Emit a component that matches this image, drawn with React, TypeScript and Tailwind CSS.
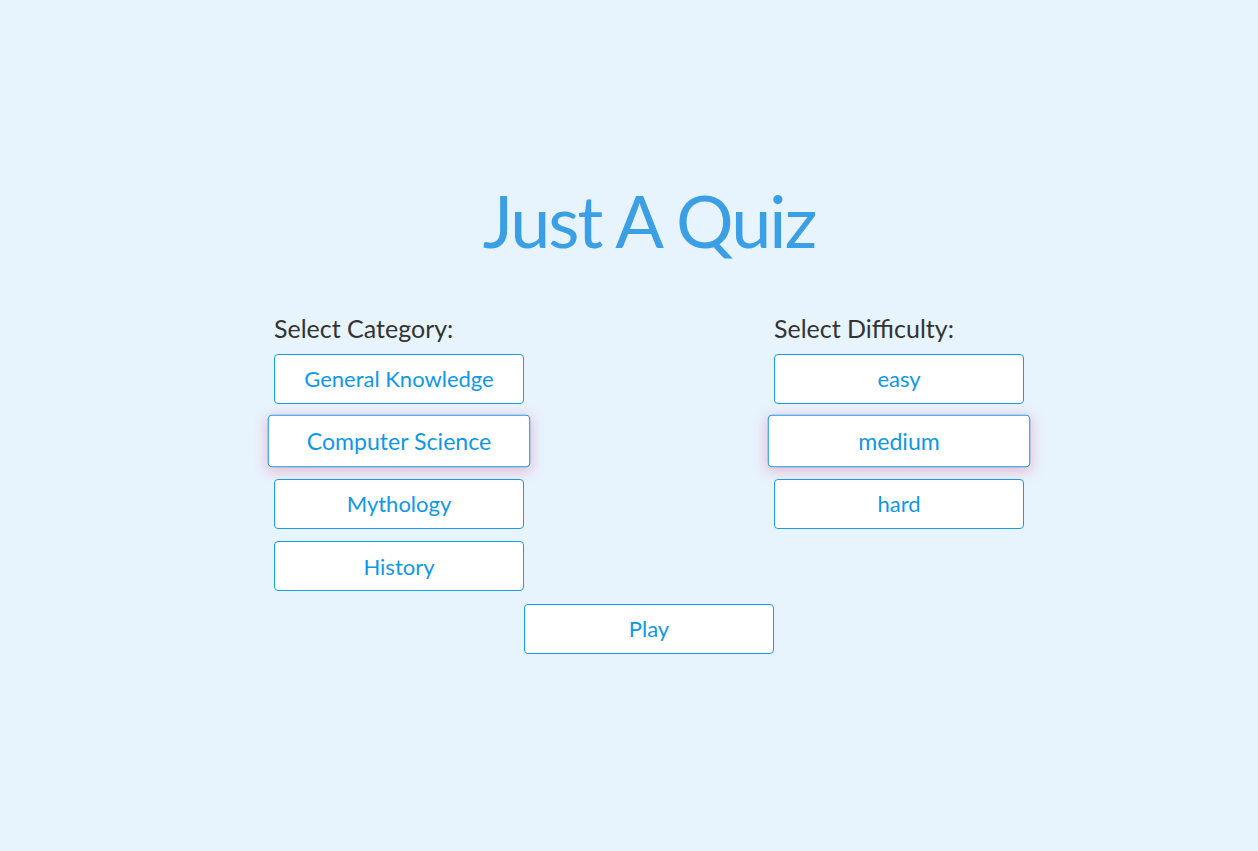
import React, { useState } from 'react';

const categories = ['General Knowledge', 'Computer Science', 'Mythology', 'History'];
const difficulties = ['easy', 'medium', 'hard'];

const OptionButton: React.FC<{ label: string; active?: boolean; onClick?: () => void }> = ({ label, active, onClick }) => (
  <button
    type="button"
    onClick={onClick}
    className={`w-[250px] h-[50px] bg-white border border-[#1a9be6] rounded-[4px] text-[22px] text-[#0f98e8] transition-all ${
      active ? 'scale-105 shadow-[0_3px_12px_rgba(235,95,135,0.4)]' : ''
    }`}
  >
    {label}
  </button>
);

const App: React.FC = () => {
  const [category, setCategory] = useState('Computer Science');
  const [difficulty, setDifficulty] = useState('medium');

  return (
    <div className="min-h-[851px] w-full bg-[#e7f3fd] pl-[40px] font-['Lato','Noto_Sans',sans-serif]">
      <div className="flex flex-col items-center pt-[180px]">
        <h1 className="text-[72px] leading-[80px] tracking-[-2px] text-[#3a9fe5]">Just A Quiz</h1>

        <div className="mt-[53px] flex gap-[250px]">
          <div className="flex flex-col gap-[12.5px]">
            <div className="text-[25px] leading-[30px] text-[#333] -mb-[2px]">Select Category:</div>
            {categories.map((c) => (
              <OptionButton key={c} label={c} active={category === c} onClick={() => setCategory(c)} />
            ))}
          </div>
          <div className="flex flex-col gap-[12.5px]">
            <div className="text-[25px] leading-[30px] text-[#333] -mb-[2px]">Select Difficulty:</div>
            {difficulties.map((d) => (
              <OptionButton key={d} label={d} active={difficulty === d} onClick={() => setDifficulty(d)} />
            ))}
          </div>
        </div>

        <div className="mt-[12.5px]">
          <OptionButton label="Play" />
        </div>
      </div>
    </div>
  );
};

export default App;
